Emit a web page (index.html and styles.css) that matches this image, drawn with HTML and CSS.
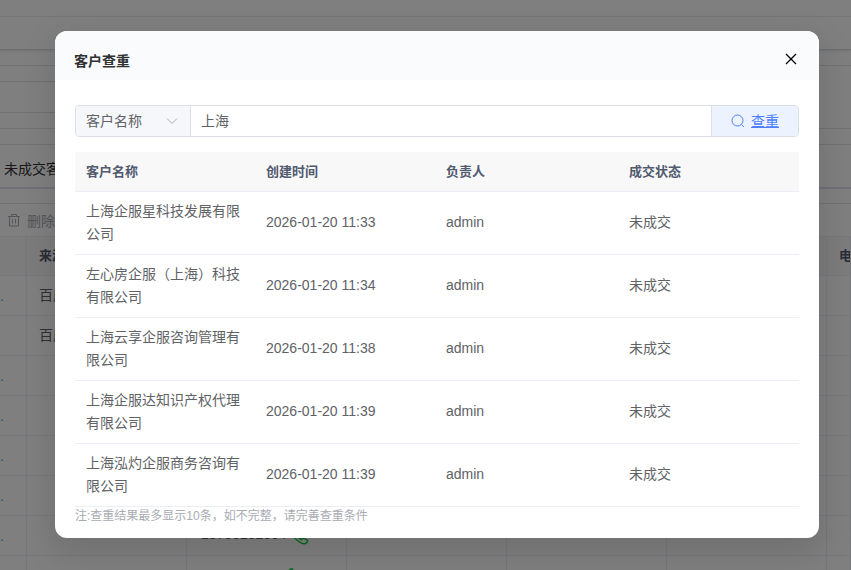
FILE: index.html
```html
<!DOCTYPE html>
<html lang="zh-CN">
<head>
  <meta charset="utf-8">
  <title>客户查重</title>
  <link rel="stylesheet" href="styles.css">
</head>
<body>
  <div class="page">
    <div class="page-nav"></div>
    <div class="page-tags"></div>
    <div class="filter-card">
      <input class="filter-input" type="text" aria-label="筛选">
    </div>
    <div class="tabs-card">
      <div class="tabs">未成交客户</div>
    </div>
    <div class="toolbar">
      <button class="delete-button" type="button">
        <svg width="14" height="14" viewBox="0 0 14 14" fill="none" stroke="currentColor">
          <path d="M1 3.500h12M4.500 3.500v-2h5v2M2.500 3.500v9.500h9v-9.500M5.500 6v4.500M8.500 6v4.500"/>
        </svg>
        删除
      </button>
    </div>
    <table class="list-table">
      <colgroup>
        <col class="col-name"><col class="col"><col class="col"><col class="col"><col class="col"><col class="col"><col>
      </colgroup>
      <thead>
        <tr><th></th><th>来源</th><th></th><th></th><th></th><th></th><th>电</th></tr>
      </thead>
      <tbody>
        <tr><td class="more">.</td><td>百度</td><td></td><td></td><td></td><td></td><td></td></tr>
        <tr><td></td><td>百度</td><td></td><td></td><td></td><td></td><td></td></tr>
        <tr><td class="more">.</td><td></td><td></td><td></td><td></td><td></td><td></td></tr>
        <tr><td class="more">.</td><td></td><td></td><td></td><td></td><td></td><td></td></tr>
        <tr><td class="more">.</td><td></td><td></td><td></td><td></td><td></td><td></td></tr>
        <tr><td class="more">.</td><td></td><td></td><td></td><td></td><td></td><td></td></tr>
        <tr>
          <td class="more">.</td><td></td>
          <td>
            <div class="phone">13700202004
              <svg width="18" height="18" viewBox="0 0 18 18" fill="none" stroke="currentColor" stroke-width="1.500">
                <path d="M4 2C1.500 3 1 5.500 2.500 8.500c1.600 3.200 4.500 6 8 7.700 2.600 1.200 5 .6 6-1.600.3-.8.1-1.400-.6-1.700l-3-1.600c-.7-.3-1.200-.1-1.700.7-.5.8-1.200.7-2 .1C7.900 11.200 6.800 10 6 8.600c-.4-.8-.3-1.300.3-1.700.8-.5 1-1.100.7-1.800L5.600 2.500C5.300 1.800 4.800 1.700 4 2zM10 3a5 5 0 0 1 5 5M10 6.500a2 2 0 0 1 2 2"/>
              </svg>
            </div>
          </td>
          <td></td><td></td><td></td><td></td>
        </tr>
        <tr>
          <td></td><td></td>
          <td>
            <div class="phone phone-icon">
              <svg width="18" height="18" viewBox="0 0 18 18" fill="none" stroke="currentColor" stroke-width="1.500">
                <path d="M4 2C1.500 3 1 5.500 2.500 8.500c1.600 3.200 4.500 6 8 7.700 2.600 1.200 5 .6 6-1.600.3-.8.1-1.400-.6-1.700l-3-1.600c-.7-.3-1.200-.1-1.700.7-.5.8-1.200.7-2 .1C7.900 11.200 6.800 10 6 8.600c-.4-.8-.3-1.300.3-1.700.8-.5 1-1.100.7-1.800L5.600 2.500C5.300 1.800 4.800 1.700 4 2z"/>
              </svg>
            </div>
          </td>
          <td></td><td></td><td></td><td></td>
        </tr>
      </tbody>
    </table>
  </div>

  <div class="overlay">
    <div class="dialog" role="dialog" aria-labelledby="dialogTitle">
      <div class="dialog-header">
        <h2 id="dialogTitle">客户查重</h2>
        <button class="close-button" type="button" aria-label="关闭">
          <svg width="12" height="12" viewBox="0 0 12 12" fill="none" stroke="currentColor" stroke-width="1.300">
            <path d="M1 1l10 10M11 1L1 11"/>
          </svg>
        </button>
      </div>
      <div class="dialog-body">
        <div class="search-group">
          <div class="select-wrap">
            <select aria-label="查询字段">
              <option>客户名称</option>
            </select>
            <svg width="12" height="12" viewBox="0 0 12 12" fill="none" stroke="currentColor">
              <path d="M1 3.500l5 5 5-5"/>
            </svg>
          </div>
          <input class="search-input" type="text" value="上海" aria-label="关键词">
          <button class="search-button" type="button">
            <svg width="14" height="14" viewBox="0 0 14 14" fill="none" stroke="currentColor">
              <circle cx="6.500" cy="6.500" r="5.500"/>
              <path d="M10.500 10.500l2.500 2.500"/>
            </svg>
            <span>查重</span>
          </button>
        </div>
        <table class="result-table">
          <thead>
            <tr><th class="name">客户名称</th><th class="created">创建时间</th><th class="owner">负责人</th><th>成交状态</th></tr>
          </thead>
          <tbody>
            <tr><td>上海企服星科技发展有限公司</td><td>2026-01-20 11:33</td><td>admin</td><td>未成交</td></tr>
            <tr><td>左心房企服（上海）科技有限公司</td><td>2026-01-20 11:34</td><td>admin</td><td>未成交</td></tr>
            <tr><td>上海云享企服咨询管理有限公司</td><td>2026-01-20 11:38</td><td>admin</td><td>未成交</td></tr>
            <tr><td>上海企服达知识产权代理有限公司</td><td>2026-01-20 11:39</td><td>admin</td><td>未成交</td></tr>
            <tr><td>上海泓灼企服商务咨询有限公司</td><td>2026-01-20 11:39</td><td>admin</td><td>未成交</td></tr>
          </tbody>
        </table>
        <p class="note">注:查重结果最多显示10条，如不完整，请完善查重条件</p>
      </div>
    </div>
  </div>
</body>
</html>
```
FILE: styles.css
```css
* {
  box-sizing: border-box;
}

body {
  margin: 0;
  height: 100vh;
  overflow: hidden;
  font-family: "Liberation Sans", "Noto Sans CJK SC", sans-serif;
  font-size: 14px;
  color: #606266;
  background-color: #fff;
}

button,
input,
select {
  font: inherit;
}

/* Customer list behind the dialog */
.page-nav {
  height: 17px;
  border-bottom: 1px solid #f0f0f0;
}

.page-tags {
  height: 33px;
  border-bottom: 1px solid #d8dce5;
  box-shadow: 0 1px 3px rgba(0, 0, 0, 0.12);
}

.filter-card {
  height: 64px;
  margin-top: 15px;
  padding-top: 15px;
  border-top: 1px solid #e4e4e8;
  border-bottom: 1px solid #e4e4e8;
}

.filter-input {
  display: block;
  width: 200px;
  height: 32px;
  border: 1px solid #dcdfe6;
  border-left: none;
  background-color: #fff;
}

.tabs-card {
  height: 60px;
  margin-top: 15px;
  border-top: 1px solid #e4e4e8;
  border-bottom: 1px solid #e4e4e8;
}

.tabs {
  height: 44px;
  padding-left: 4px;
  line-height: 48px;
  color: #303133;
  border-bottom: 2px solid #dfe2ea;
}

.toolbar {
  display: flex;
  align-items: center;
  height: 32px;
  padding-left: 7px;
  padding-bottom: 1px;
}

.delete-button {
  display: flex;
  align-items: center;
  gap: 6px;
  padding: 0;
  border: none;
  background: none;
  color: #a8abb2;
}

.list-table {
  width: 100%;
  table-layout: fixed;
  border-collapse: separate;
  border-spacing: 0;
  border-top: 1px solid #ebeef5;
}

.list-table .col-name {
  width: 27px;
}

.list-table .col {
  width: 160px;
}

.list-table th,
.list-table td {
  height: 40px;
  padding: 0 0 4px 12px;
  border-right: 1px solid #ebeef5;
  border-bottom: 1px solid #ebeef5;
  text-align: left;
  white-space: nowrap;
  overflow: hidden;
}

.list-table th {
  height: 39px;
  font-size: 13px;
  color: #515a6e;
  background-color: #f8f8f9;
}

.list-table .more {
  padding-left: 0;
  padding-bottom: 0;
  color: #409eff;
}

.phone {
  display: flex;
  align-items: center;
  gap: 4px;
  padding-left: 2px;
}

.phone svg {
  margin-top: 4px;
  color: #13ce40;
}

.phone-icon {
  padding-left: 88px;
}

/* Dialog */
.overlay {
  position: absolute;
  inset: 0;
  padding: 31px 32px 32px 55px;
  background-color: rgba(0, 0, 0, 0.5);
}

.dialog {
  border-radius: 12px;
  overflow: hidden;
  background-color: #fff;
  box-shadow: 0 12px 32px 4px rgba(0, 0, 0, 0.12);
}

.dialog-header {
  display: flex;
  align-items: center;
  justify-content: space-between;
  height: 49px;
  padding: 10px 20px 0 19px;
  background-color: #fafbfd;
}

.dialog-header h2 {
  margin: 0;
  font-size: 14px;
  line-height: 24px;
  color: #303133;
}

.close-button {
  display: flex;
  padding: 2px;
  margin-bottom: 4px;
  border: none;
  background: none;
  color: #000;
  cursor: pointer;
}

.dialog-body {
  padding: 25px 20px 12px 20px;
}

.search-group {
  display: flex;
  height: 32px;
  border: 1px solid #dcdfe6;
  border-radius: 4px;
  overflow: hidden;
}

.select-wrap {
  display: flex;
  align-items: center;
  width: 115px;
  padding-right: 12px;
  border-right: 1px solid #dcdfe6;
  background-color: #f5f7fa;
  color: #a8abb2;
}

.select-wrap select {
  flex: 1;
  min-width: 0;
  height: 30px;
  padding: 0 0 0 10px;
  border: none;
  appearance: none;
  background: none;
  color: #606266;
}

.search-input {
  flex: 1;
  min-width: 0;
  padding: 0 10px 2px 10px;
  border: none;
  color: #606266;
}

.search-button {
  display: flex;
  align-items: center;
  justify-content: center;
  gap: 6px;
  width: 87px;
  padding: 0;
  border: none;
  border-left: 1px solid #dcdfe6;
  background-color: #edf2ff;
  color: #4d7fff;
  cursor: pointer;
}

.search-button span {
  padding-bottom: 2px;
  text-decoration: underline;
}

.result-table {
  width: 100%;
  margin-top: 15px;
  table-layout: fixed;
  border-spacing: 0;
}

.result-table th,
.result-table td {
  padding: 8px 12px 8px 11px;
  border-bottom: 1px solid #ebeef5;
  line-height: 23px;
  text-align: left;
}

.result-table td + td {
  padding-bottom: 10px;
}

.result-table th {
  font-size: 13px;
  color: #515a6e;
  background-color: #f8f8f9;
}

.result-table .name,
.result-table .created {
  width: 180px;
}

.result-table .owner {
  width: 183px;
}

.note {
  margin: 0;
  font-size: 12px;
  line-height: 19px;
  color: #a8abb2;
}
```
